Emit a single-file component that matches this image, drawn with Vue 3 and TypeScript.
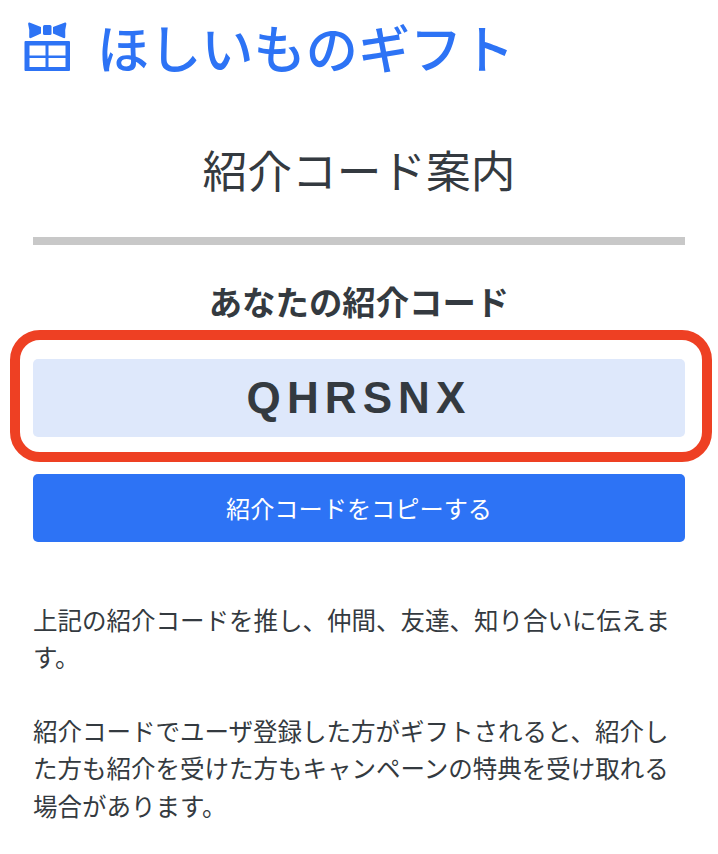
<script setup lang="ts">
const code = 'QHRSNX'
</script>

<template>
  <div class="page">
    <header class="brand">
      <svg class="logo" viewBox="24 21 46 50" width="46" height="50" aria-hidden="true">
        <path d="M29.5 22.5 L41 27 L41 33.5 L31 38 Q29 38.6 29.2 36.5 Q30 30 28.2 24.5 Q27.8 22 29.5 22.5 Z M65 22.5 L53 27 L53 33.5 L63.5 38 Q65.5 38.6 65.3 36.5 Q64.5 30 66.3 24.5 Q66.7 22 65 22.5 Z" fill="#2d73f5"/>
        <rect x="43" y="25" width="8.5" height="10" rx="1.5" fill="#2d73f5"/>
        <path fill-rule="evenodd" fill="#2d73f5" d="M24.5 42 Q24.5 41 25.5 41 H69 Q70 41 70 42 V70 Q70 71 69 71 H25.5 Q24.5 71 24.5 70 Z M29.5 45.5 V55.5 H45.5 V45.5 Z M48.5 45.5 V55.5 H65.5 V45.5 Z M29.5 58 V67 H45.5 V58 Z M48.5 58 V67 H65.5 V58 Z"/>
      </svg>
      <span class="brand-name">ほしいものギフト</span>
    </header>

    <main class="content">
      <h1 class="title">紹介コード案内</h1>
      <h2 class="subtitle">あなたの紹介コード</h2>
      <div class="code-wrap">
        <div class="code">{{ code }}</div>
        <div class="highlight"></div>
      </div>
      <button class="copy" type="button">紹介コードをコピーする</button>
      <p class="text first">上記の紹介コードを推し、仲間、友達、知り合いに伝えます。</p>
      <p class="text">紹介コードでユーザ登録した方がギフトされると、紹介した方も紹介を受けた方もキャンペーンの特典を受け取れる場合があります。</p>
    </main>
  </div>
</template>

<style>
html, body { margin: 0; background: #fff; }
</style>

<style scoped>
.page {
  width: 718px;
  height: 854px;
  overflow: hidden;
  font-family: "Noto Sans CJK JP", "Noto Sans", sans-serif;
  color: #343a40;
}
.brand {
  display: flex;
  align-items: center;
  gap: 27px;
  height: 92px;
  padding-left: 24px;
}
.logo { flex: none; }
.brand-name {
  font-size: 52.2px;
  font-weight: 500;
  line-height: 1;
  color: #2d73f5;
  white-space: nowrap;
}
.content { padding: 0 33px; }
.title {
  margin: 0;
  height: 153px;
  box-sizing: border-box;
  padding-top: 47px;
  border-bottom: 8px solid #c8c8c8;
  font-size: 44.7px;
  font-weight: 400;
  line-height: 60px;
  text-align: center;
}
.subtitle {
  margin: 31px 0 0;
  font-size: 33.4px;
  font-weight: 700;
  line-height: 50px;
  text-align: center;
}
.code-wrap { position: relative; margin-top: 33px; }
.code {
  height: 78px;
  background: #dee8fb;
  border-radius: 5px;
  font-family: "Liberation Sans", Arial, sans-serif;
  font-size: 44px;
  font-weight: 700;
  letter-spacing: 6.1px;
  line-height: 78px;
  text-align: center;
}
.highlight {
  position: absolute;
  inset: -29px -27px -25px -23px;
  border: 10px solid #ee4023;
  border-radius: 30px;
  pointer-events: none;
}
.copy {
  display: block;
  width: 100%;
  height: 68px;
  margin-top: 37px;
  padding: 0;
  border: 0;
  border-radius: 5px;
  background: #2d73f5;
  color: #fff;
  font-family: inherit;
  font-size: 24.2px;
  line-height: 66px;
}
.text {
  margin: 36px 0 0;
  font-size: 24.5px;
  line-height: 37.4px;
}
.first { margin-top: 59px; }
</style>
